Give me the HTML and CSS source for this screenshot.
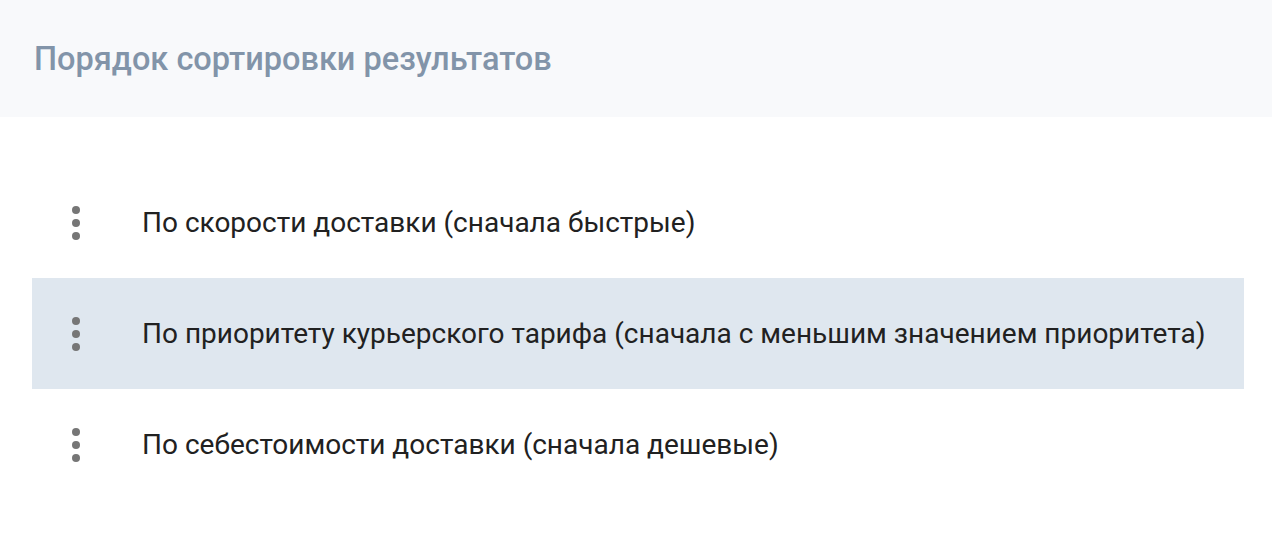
FILE: index.html
```html
<!DOCTYPE html>
<html lang="ru">
<head>
<meta charset="utf-8">
<link rel="stylesheet" href="styles.css">
</head>
<body>
<div class="panel">
  <div class="panel-header">
    <h2 class="panel-title">Порядок сортировки результатов</h2>
  </div>
  <ul class="sort-list">
    <li class="sort-item">
      <span class="handle"><svg width="8" height="34" viewBox="0 0 8 34"><circle cx="4" cy="4" r="4"/><circle cx="4" cy="17" r="4"/><circle cx="4" cy="30" r="4"/></svg></span>
      <span class="label">По скорости доставки (сначала быстрые)</span>
    </li>
    <li class="sort-item active">
      <span class="handle"><svg width="8" height="34" viewBox="0 0 8 34"><circle cx="4" cy="4" r="4"/><circle cx="4" cy="17" r="4"/><circle cx="4" cy="30" r="4"/></svg></span>
      <span class="label">По приоритету курьерского тарифа (сначала с меньшим значением приоритета)</span>
    </li>
    <li class="sort-item">
      <span class="handle"><svg width="8" height="34" viewBox="0 0 8 34"><circle cx="4" cy="4" r="4"/><circle cx="4" cy="17" r="4"/><circle cx="4" cy="30" r="4"/></svg></span>
      <span class="label">По себестоимости доставки (сначала дешевые)</span>
    </li>
  </ul>
</div>
</body>
</html>
```
FILE: styles.css
```css
html, body {
  margin: 0;
  padding: 0;
  background: #ffffff;
  font-family: Roboto, "Noto Sans", sans-serif;
}
.panel {
  width: 1272px;
}
.panel-header {
  height: 117px;
  background: #f8f9fb;
  display: flex;
  align-items: center;
  padding-left: 34px;
  box-sizing: border-box;
}
.panel-title {
  margin: 0;
  font-size: 32.5px;
  font-weight: 500;
  color: #8294a9;
  letter-spacing: 0;
}
.sort-list {
  list-style: none;
  margin: 50px 28px 0 32px;
  padding: 0;
}
.sort-item {
  height: 111px;
  display: flex;
  align-items: center;
}
.sort-item.active {
  background: #dfe7ef;
}
.handle {
  width: 110px;
  display: flex;
  padding-left: 40px;
  box-sizing: border-box;
}
.handle svg {
  fill: #767676;
  display: block;
}
.label {
  font-size: 28px;
  color: #212121;
}
```
